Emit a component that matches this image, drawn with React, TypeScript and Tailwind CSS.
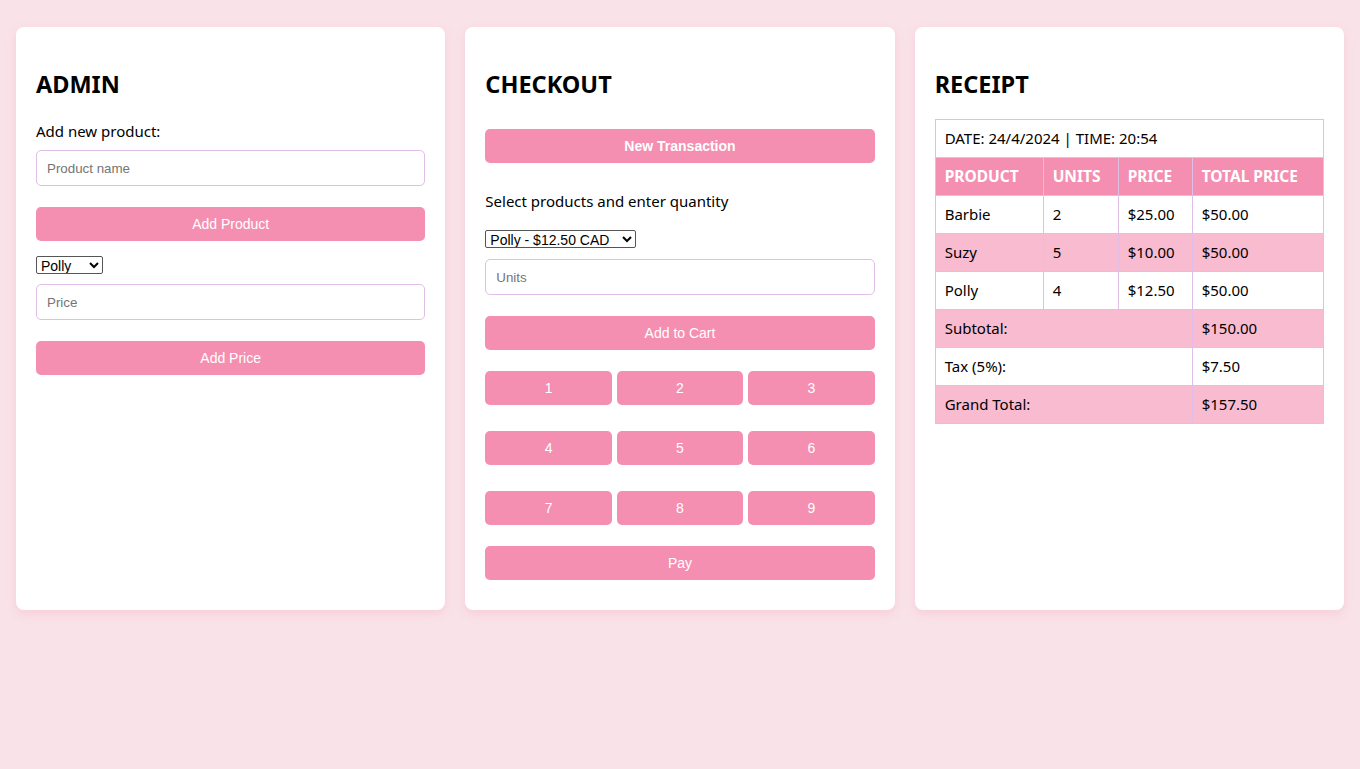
import React from "react";

const sans = "font-['Noto_Sans',_'Open_Sans',_sans-serif]";
const arial = "font-['Liberation_Sans',_Arial,_sans-serif]";

function Btn({ children, className = "" }: { children: React.ReactNode; className?: string }) {
  return (
    <button
      className={`${arial} block h-[34px] w-full rounded-[5px] bg-[#f48fb1] text-[14px] text-white ${className}`}
    >
      {children}
    </button>
  );
}

function Input({ placeholder, className = "" }: { placeholder: string; className?: string }) {
  return (
    <input
      placeholder={placeholder}
      className={`${arial} block h-[36px] w-full rounded-[5px] border border-[#e1bee7] bg-white px-[10px] text-[13.33px] text-black placeholder:text-[#757575] outline-none ${className}`}
    />
  );
}

function Card({ children }: { children: React.ReactNode }) {
  return (
    <div className="flex flex-1 flex-col rounded-[8px] bg-white px-[20px] pt-[20px] pb-[30px] shadow-[0_4px_10px_rgba(240,150,180,0.25)]">
      {children}
    </div>
  );
}

function Heading({ children }: { children: React.ReactNode }) {
  return (
    <h2 className={`${sans} mt-[21px] h-[32px] text-[23.5px] font-bold leading-[32px] text-black`}>{children}</h2>
  );
}

const cell = "border border-[#e1bee7] px-[9px] h-[38px] text-left align-middle";

export default function App() {
  const rows = [
    ["Barbie", "2", "$25.00", "$50.00"],
    ["Suzy", "5", "$10.00", "$50.00"],
    ["Polly", "4", "$12.50", "$50.00"],
  ];
  return (
    <div className={`min-h-[769px] w-full bg-[#fae2e9] ${sans}`}>
      <div className="flex items-stretch gap-5 px-4 pt-[27px]">
        <Card>
          <Heading>ADMIN</Heading>
          <p className="mt-[20px] h-[22px] text-[15px] leading-[22px] text-black">Add new product:</p>
          <Input placeholder="Product name" className="mt-[8px]" />
          <Btn className="mt-[21px]">Add Product</Btn>
          <select className={`${arial} mt-[15px] block h-[18px] w-[67px] rounded-[2px] border border-[#555] bg-white text-[14px] leading-none text-black`}>
            <option>Polly</option>
            <option>Barbie</option>
            <option>Suzy</option>
          </select>
          <Input placeholder="Price" className="mt-[10px]" />
          <Btn className="mt-[21px]">Add Price</Btn>
        </Card>

        <Card>
          <Heading>CHECKOUT</Heading>
          <Btn className="mt-[29px] font-bold">New Transaction</Btn>
          <p className="mt-[27px] h-[22px] text-[15px] leading-[22px] text-black">Select products and enter quantity</p>
          <select className={`${arial} mt-[18px] block h-[18px] w-[151px] rounded-[2px] border border-[#555] bg-white text-[14px] leading-none text-black`}>
            <option>Polly - $12.50 CAD</option>
            <option>Barbie - $25.00 CAD</option>
            <option>Suzy - $10.00 CAD</option>
          </select>
          <Input placeholder="Units" className="mt-[11px]" />
          <Btn className="mt-[21px]">Add to Cart</Btn>
          <div className="mt-[21px] grid grid-cols-3 gap-x-[5px] gap-y-[26px]">
            {["1", "2", "3", "4", "5", "6", "7", "8", "9"].map((n) => (
              <Btn key={n}>{n}</Btn>
            ))}
          </div>
          <Btn className="mt-[21px]">Pay</Btn>
        </Card>

        <Card>
          <Heading>RECEIPT</Heading>
          <table className="mt-[19px] w-full border-collapse text-[15px] text-black">
            <tbody>
              <tr>
                <td colSpan={4} className={`${cell} bg-white`}>DATE: 24/4/2024 | TIME: 20:54</td>
              </tr>
              <tr className="bg-[#f48fb1] text-[15.5px] font-bold text-white">
                <td className={`${cell} w-[108px]`}>PRODUCT</td>
                <td className={`${cell} w-[75px] px-[8px]`}>UNITS</td>
                <td className={`${cell} w-[74px] px-[8px]`}>PRICE</td>
                <td className={`${cell} px-[8px]`}>TOTAL PRICE</td>
              </tr>
              {rows.map((r, i) => (
                <tr key={r[0]} className={i % 2 === 1 ? "bg-[#f8bbd0]" : "bg-white"}>
                  <td className={cell}>{r[0]}</td>
                  <td className={`${cell} px-[8px]`}>{r[1]}</td>
                  <td className={`${cell} px-[8px]`}>{r[2]}</td>
                  <td className={`${cell} px-[8px]`}>{r[3]}</td>
                </tr>
              ))}
              <tr className="bg-[#f8bbd0]">
                <td colSpan={3} className={cell}>Subtotal:</td>
                <td className={`${cell} px-[8px]`}>$150.00</td>
              </tr>
              <tr className="bg-white">
                <td colSpan={3} className={cell}>Tax (5%):</td>
                <td className={`${cell} px-[8px]`}>$7.50</td>
              </tr>
              <tr className="bg-[#f8bbd0]">
                <td colSpan={3} className={cell}>Grand Total:</td>
                <td className={`${cell} px-[8px]`}>$157.50</td>
              </tr>
            </tbody>
          </table>
        </Card>
      </div>
    </div>
  );
}
